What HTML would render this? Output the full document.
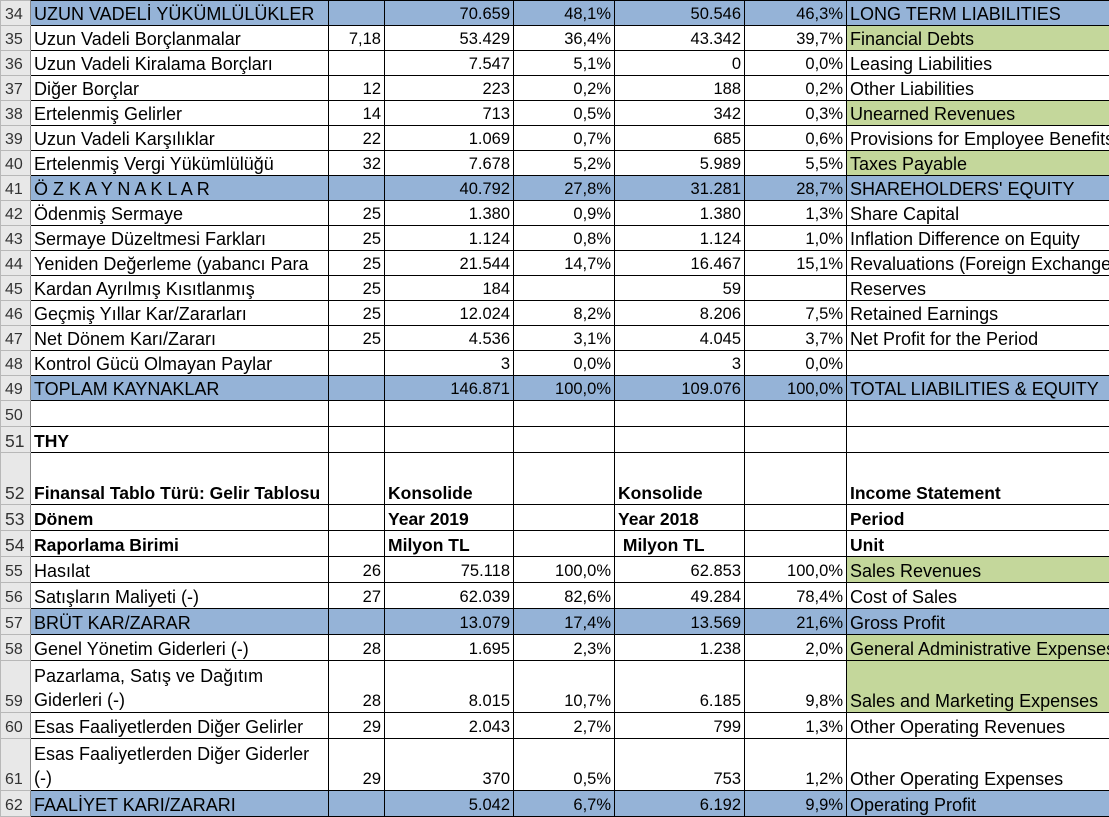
<!DOCTYPE html>
<html><head><meta charset="utf-8"><style>
body{margin:0;width:1109px;height:815px;overflow:hidden;background:#fff;font-family:"Liberation Sans",sans-serif;font-size:18px;color:#000}
table{border-collapse:collapse;table-layout:fixed;position:absolute;left:0;top:0;width:1110px}
td{border:1px solid #000;padding:0 3px 0 3px;vertical-align:bottom;white-space:nowrap;overflow:hidden;line-height:21px}
td.h{background:#e8e8e8;border-color:#b8b8b8;border-right:1px solid #888;color:#333;padding-left:4px;text-align:left;font-size:16px}
td.r{text-align:right;font-size:16.5px}
tr.b td:not(.h){background:#95b3d7}
td.g{background:#c4d79b}
tr.bold td{font-weight:bold;font-size:17.5px}
td.w{line-height:24px;padding-bottom:0}
</style></head><body>
<table>
<colgroup><col style="width:30px"><col style="width:298px"><col style="width:56px"><col style="width:129px"><col style="width:101px"><col style="width:130px"><col style="width:102px"><col style="width:264px"></colgroup>
<tr class="b" style="height:25px"><td class="h">34</td><td>UZUN VADELİ YÜKÜMLÜLÜKLER</td><td></td><td class="r">70.659</td><td class="r">48,1%</td><td class="r">50.546</td><td class="r">46,3%</td><td>LONG TERM LIABILITIES</td></tr>
<tr style="height:25px"><td class="h">35</td><td>Uzun Vadeli Borçlanmalar</td><td class="r">7,18</td><td class="r">53.429</td><td class="r">36,4%</td><td class="r">43.342</td><td class="r">39,7%</td><td class="g">Financial Debts</td></tr>
<tr style="height:25px"><td class="h">36</td><td>Uzun Vadeli Kiralama Borçları</td><td></td><td class="r">7.547</td><td class="r">5,1%</td><td class="r">0</td><td class="r">0,0%</td><td>Leasing Liabilities</td></tr>
<tr style="height:25px"><td class="h">37</td><td>Diğer Borçlar</td><td class="r">12</td><td class="r">223</td><td class="r">0,2%</td><td class="r">188</td><td class="r">0,2%</td><td>Other Liabilities</td></tr>
<tr style="height:25px"><td class="h">38</td><td>Ertelenmiş Gelirler</td><td class="r">14</td><td class="r">713</td><td class="r">0,5%</td><td class="r">342</td><td class="r">0,3%</td><td class="g">Unearned Revenues</td></tr>
<tr style="height:25px"><td class="h">39</td><td>Uzun Vadeli Karşılıklar</td><td class="r">22</td><td class="r">1.069</td><td class="r">0,7%</td><td class="r">685</td><td class="r">0,6%</td><td>Provisions for Employee Benefits</td></tr>
<tr style="height:25px"><td class="h">40</td><td>Ertelenmiş Vergi Yükümlülüğü</td><td class="r">32</td><td class="r">7.678</td><td class="r">5,2%</td><td class="r">5.989</td><td class="r">5,5%</td><td class="g">Taxes Payable</td></tr>
<tr class="b" style="height:25px"><td class="h">41</td><td>Ö Z K A Y N A K L A R</td><td></td><td class="r">40.792</td><td class="r">27,8%</td><td class="r">31.281</td><td class="r">28,7%</td><td>SHAREHOLDERS' EQUITY</td></tr>
<tr style="height:25px"><td class="h">42</td><td>Ödenmiş Sermaye</td><td class="r">25</td><td class="r">1.380</td><td class="r">0,9%</td><td class="r">1.380</td><td class="r">1,3%</td><td>Share Capital</td></tr>
<tr style="height:25px"><td class="h">43</td><td>Sermaye Düzeltmesi Farkları</td><td class="r">25</td><td class="r">1.124</td><td class="r">0,8%</td><td class="r">1.124</td><td class="r">1,0%</td><td>Inflation Difference on Equity</td></tr>
<tr style="height:25px"><td class="h">44</td><td>Yeniden Değerleme (yabancı Para</td><td class="r">25</td><td class="r">21.544</td><td class="r">14,7%</td><td class="r">16.467</td><td class="r">15,1%</td><td>Revaluations (Foreign Exchange</td></tr>
<tr style="height:25px"><td class="h">45</td><td>Kardan Ayrılmış Kısıtlanmış</td><td class="r">25</td><td class="r">184</td><td></td><td class="r">59</td><td></td><td>Reserves</td></tr>
<tr style="height:25px"><td class="h">46</td><td>Geçmiş Yıllar Kar/Zararları</td><td class="r">25</td><td class="r">12.024</td><td class="r">8,2%</td><td class="r">8.206</td><td class="r">7,5%</td><td>Retained Earnings</td></tr>
<tr style="height:25px"><td class="h">47</td><td>Net Dönem Karı/Zararı</td><td class="r">25</td><td class="r">4.536</td><td class="r">3,1%</td><td class="r">4.045</td><td class="r">3,7%</td><td>Net Profit for the Period</td></tr>
<tr style="height:25px"><td class="h">48</td><td>Kontrol Gücü Olmayan Paylar</td><td></td><td class="r">3</td><td class="r">0,0%</td><td class="r">3</td><td class="r">0,0%</td><td></td></tr>
<tr class="b" style="height:25px"><td class="h">49</td><td>TOPLAM KAYNAKLAR</td><td></td><td class="r">146.871</td><td class="r">100,0%</td><td class="r">109.076</td><td class="r">100,0%</td><td>TOTAL LIABILITIES &amp; EQUITY</td></tr>
<tr style="height:26px"><td class="h">50</td><td></td><td></td><td></td><td></td><td></td><td></td><td></td></tr>
<tr class="bold" style="height:26px"><td class="h" style="font-weight:normal">51</td><td>THY</td><td></td><td></td><td></td><td></td><td></td><td></td></tr>
<tr class="bold" style="height:52px"><td class="h" style="font-weight:normal">52</td><td>Finansal Tablo Türü: Gelir Tablosu</td><td></td><td>Konsolide</td><td></td><td>Konsolide</td><td></td><td>Income Statement</td></tr>
<tr class="bold" style="height:26px"><td class="h" style="font-weight:normal">53</td><td>Dönem</td><td></td><td>Year 2019</td><td></td><td>Year 2018</td><td></td><td>Period</td></tr>
<tr class="bold" style="height:26px"><td class="h" style="font-weight:normal">54</td><td>Raporlama Birimi</td><td></td><td>Milyon TL</td><td></td><td>&nbsp;Milyon TL</td><td></td><td>Unit</td></tr>
<tr style="height:26px"><td class="h">55</td><td>Hasılat</td><td class="r">26</td><td class="r">75.118</td><td class="r">100,0%</td><td class="r">62.853</td><td class="r">100,0%</td><td class="g">Sales Revenues</td></tr>
<tr style="height:26px"><td class="h">56</td><td>Satışların Maliyeti (-)</td><td class="r">27</td><td class="r">62.039</td><td class="r">82,6%</td><td class="r">49.284</td><td class="r">78,4%</td><td>Cost of Sales</td></tr>
<tr class="b" style="height:26px"><td class="h">57</td><td>BRÜT KAR/ZARAR</td><td></td><td class="r">13.079</td><td class="r">17,4%</td><td class="r">13.569</td><td class="r">21,6%</td><td>Gross Profit</td></tr>
<tr style="height:26px"><td class="h">58</td><td>Genel Yönetim Giderleri (-)</td><td class="r">28</td><td class="r">1.695</td><td class="r">2,3%</td><td class="r">1.238</td><td class="r">2,0%</td><td class="g">General Administrative Expenses</td></tr>
<tr style="height:52px"><td class="h">59</td><td class="w">Pazarlama, Satış ve Dağıtım<br>Giderleri (-)</td><td class="r">28</td><td class="r">8.015</td><td class="r">10,7%</td><td class="r">6.185</td><td class="r">9,8%</td><td class="g">Sales and Marketing Expenses</td></tr>
<tr style="height:26px"><td class="h">60</td><td>Esas Faaliyetlerden Diğer Gelirler</td><td class="r">29</td><td class="r">2.043</td><td class="r">2,7%</td><td class="r">799</td><td class="r">1,3%</td><td>Other Operating Revenues</td></tr>
<tr style="height:52px"><td class="h">61</td><td class="w">Esas Faaliyetlerden Diğer Giderler<br>(-)</td><td class="r">29</td><td class="r">370</td><td class="r">0,5%</td><td class="r">753</td><td class="r">1,2%</td><td>Other Operating Expenses</td></tr>
<tr class="b" style="height:26px"><td class="h">62</td><td>FAALİYET KARI/ZARARI</td><td></td><td class="r">5.042</td><td class="r">6,7%</td><td class="r">6.192</td><td class="r">9,9%</td><td>Operating Profit</td></tr>
</table>
</body></html>
